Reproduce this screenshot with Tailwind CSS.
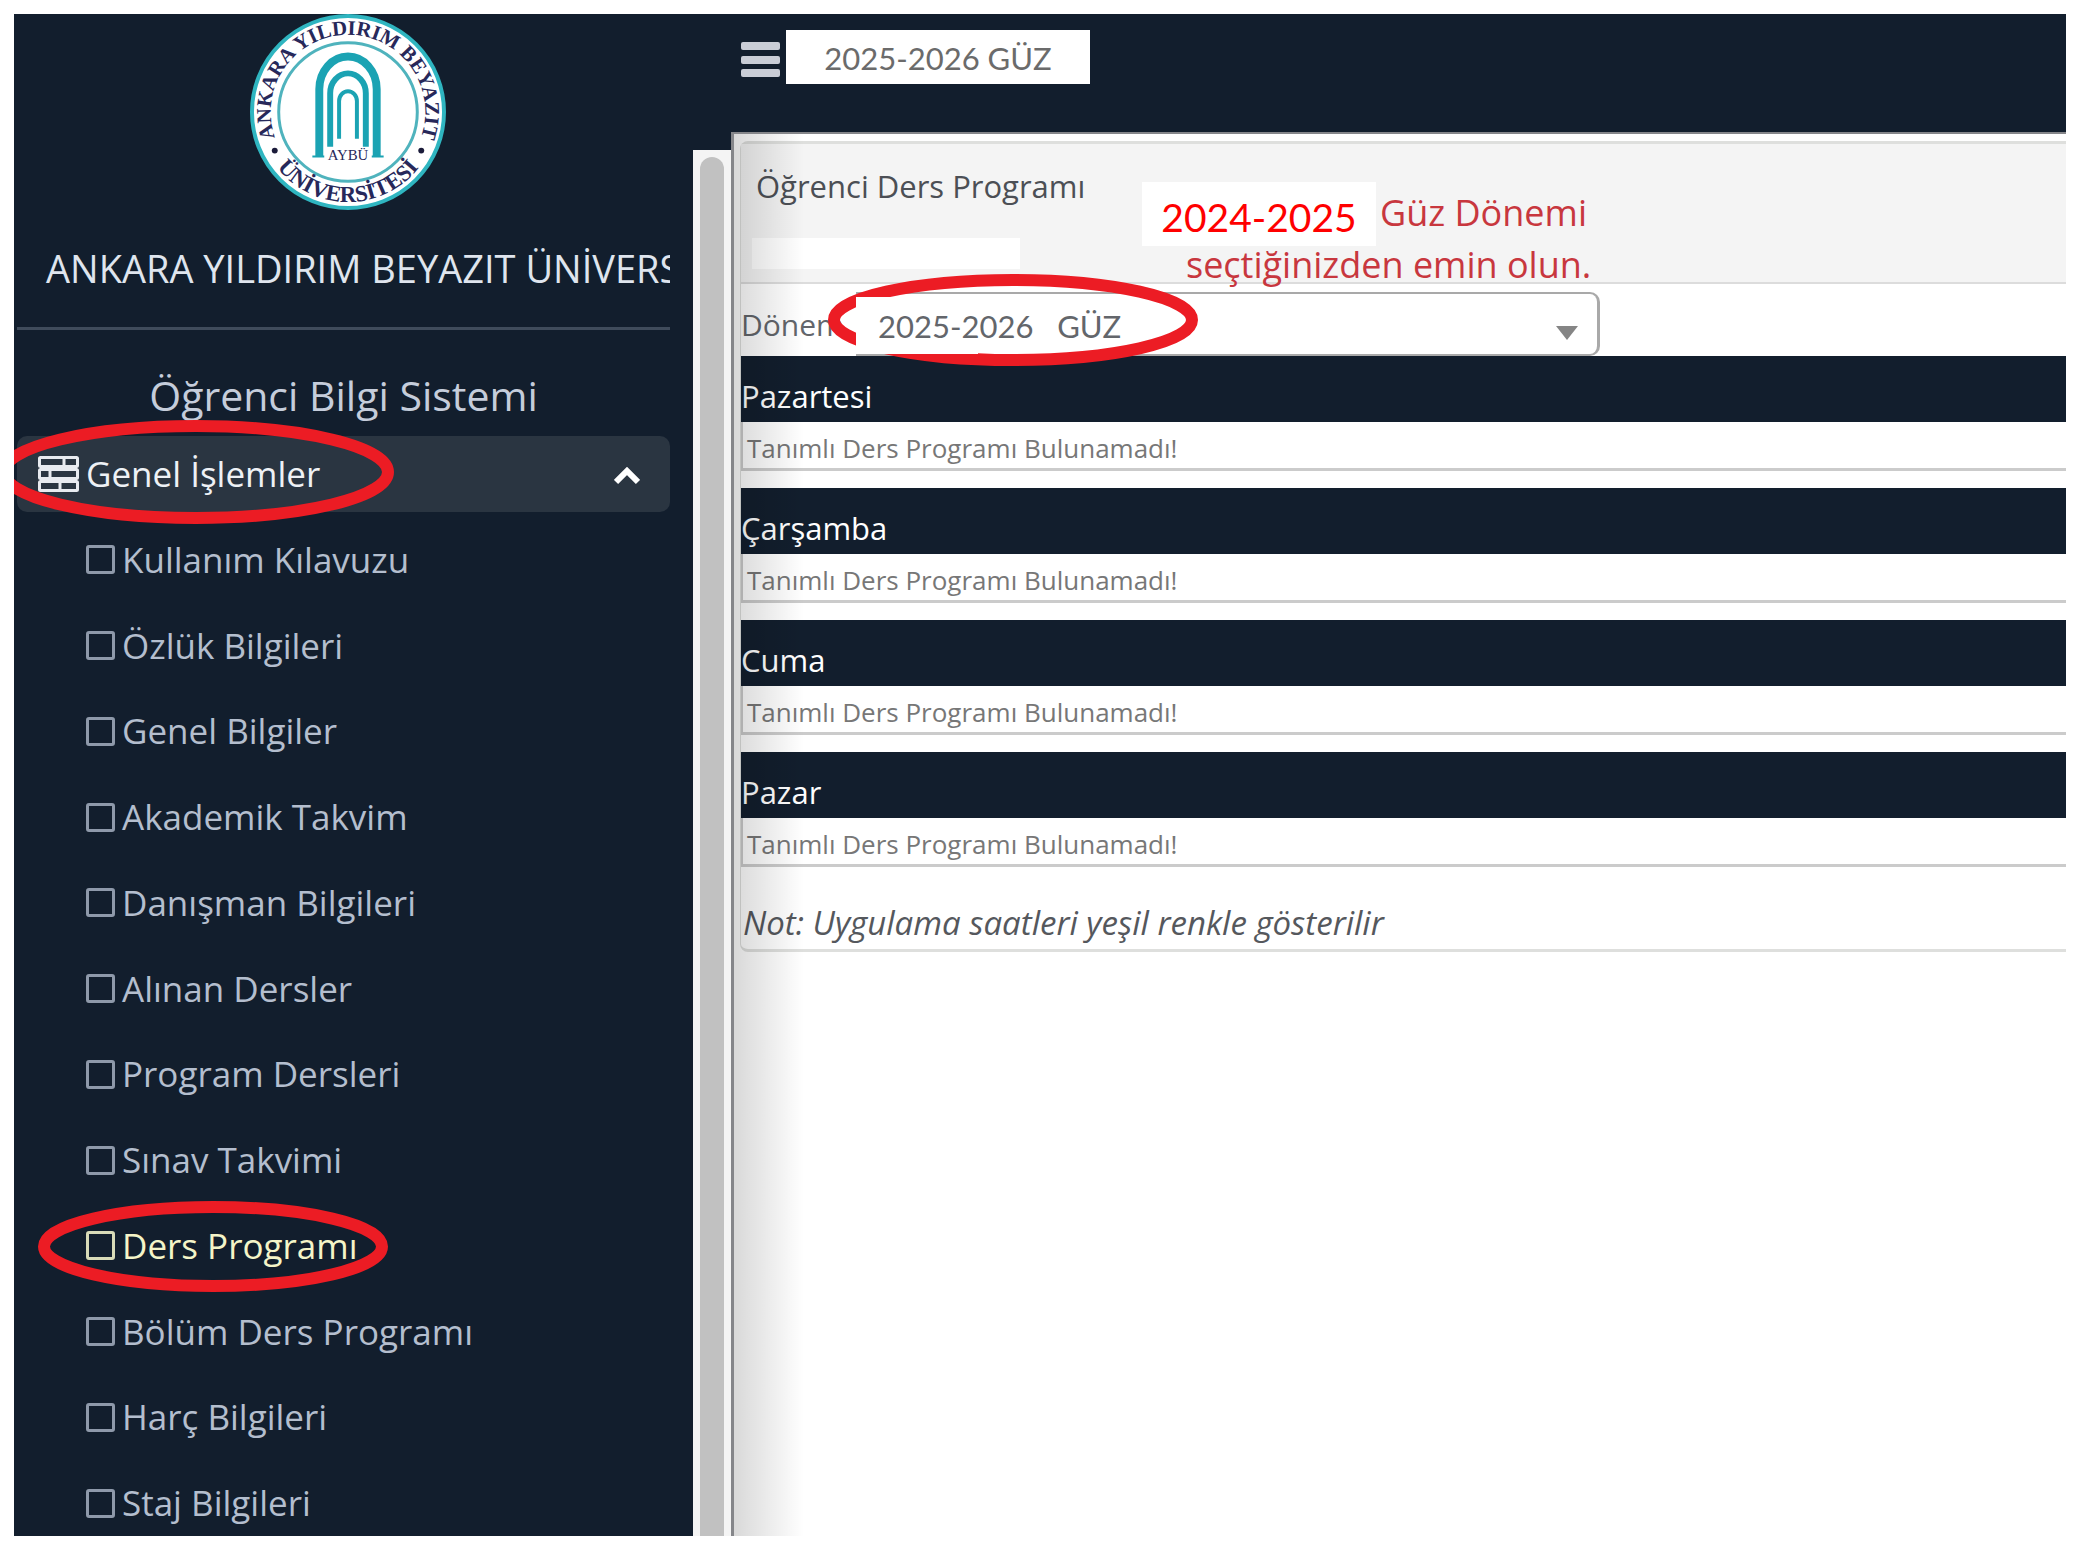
<!DOCTYPE html>
<html lang="tr">
<head>
<meta charset="utf-8">
<title>Öğrenci Ders Programı</title>
<script src="https://cdn.jsdelivr.net/npm/@tailwindcss/browser@4"></script>
</head>
<body class="flex h-screen overflow-hidden bg-white pt-[14px] pr-5 pb-[10px] pl-[14px] font-['Open_Sans',sans-serif]">

<aside class="flex w-[717px] shrink-0 overflow-hidden bg-[#121e2d]">
  <div class="w-[679px] shrink-0 pl-[3px]">
    <div class="w-[653px]">
      <svg class="ml-[233px] block size-[196px]" viewBox="0 0 198 198" role="img" aria-label="Ankara Yıldırım Beyazıt Üniversitesi">
        <defs>
          <path id="arcTop" d="M27 129A78 78 0 1 1 171 129"/>
          <path id="arcBottom" d="M8 99A91 91 0 0 0 190 99"/>
        </defs>
        <circle cx="99" cy="99" r="97" fill="#fff" stroke="#2fb5c0" stroke-width="4"/>
        <circle cx="99" cy="99" r="70" fill="#fff" stroke="#4fb3bd" stroke-width="3"/>
        <g fill="#27285a" font-family="'Liberation Serif', serif" font-weight="bold">
          <text font-size="21" text-anchor="middle"><textPath href="#arcTop" startOffset="50%">ANKARA YILDIRIM BEYAZIT</textPath></text>
          <text font-size="23" text-anchor="middle"><textPath href="#arcBottom" startOffset="50%">ÜNİVERSİTESİ</textPath></text>
          <text x="99" y="147" font-size="15" font-weight="normal" text-anchor="middle">AYBÜ</text>
        </g>
        <circle cx="25" cy="138" r="3" fill="#1b1b3a"/><circle cx="173" cy="138" r="3" fill="#1b1b3a"/>
        <g fill="none" stroke="#1ba3b3">
          <path d="M70 144V76a29 33 0 0 1 58 0v68" stroke-width="8"/>
          <path d="M81 134V80a18 20 0 0 1 36 0v54" stroke-width="6"/>
          <path d="M90 126V88a9 10 0 0 1 18 0v38" stroke-width="4"/>
          <path d="M63 144h12M123 144h12" stroke-width="2"/>
        </g>
      </svg>
      <p class="mt-7 overflow-hidden pl-[29px] text-[38px] leading-[60px] whitespace-nowrap text-[#dfe5ee]">ANKARA YILDIRIM BEYAZIT ÜNİVERSİTESİ</p>
      <hr class="mt-[29px] border-t-[3px] border-[#3f4b5b]">
      <p class="mt-[35px] text-center text-[41px] leading-[60px] text-[#c5cddb]">Öğrenci Bilgi Sistemi</p>
      <div class="relative mt-[11px]">
        <button type="button" class="flex h-[76px] w-full items-center rounded-[10px] bg-[#2a3541] pr-[30px] pl-[21px] text-left text-[35px] text-[#eef1f5]">
          <svg class="mr-[7px] h-[36px] w-[41px]" viewBox="0 0 41 36" fill="none" stroke="#e8ebf0" stroke-width="3" aria-hidden="true">
            <rect x="1.500" y="1.500" width="38" height="9" rx="1"/><rect x="1.500" y="13.500" width="38" height="9" rx="1"/><rect x="1.500" y="25.500" width="38" height="9" rx="1"/>
            <path d="M26 2v8M12 14v8M22 26v8"/>
          </svg>
          <span class="flex-1">Genel İşlemler</span>
          <svg class="mt-1 h-[18px] w-[26px]" viewBox="0 0 26 18" fill="none" stroke="#fff" stroke-width="6" aria-hidden="true"><path d="M2 15 13 4l11 11"/></svg>
        </button>
        <svg class="pointer-events-none absolute -top-4 -left-[19px] h-[104px] w-[397px]" viewBox="0 0 397 104" fill="none" stroke="#ec1c24" stroke-width="12" aria-hidden="true"><ellipse cx="198" cy="52" rx="192" ry="46"/></svg>
      </div>
      <nav class="mt-[5px] grid h-[1029px] auto-rows-fr text-[35px] leading-[60px] text-[#b4bece]">
        <a href="#" class="flex items-center pl-[69px]"><span class="mr-[7px] size-[29px] rounded-[3px] border-3 border-[#8e99aa]"></span>Kullanım Kılavuzu</a>
        <a href="#" class="flex items-center pl-[69px]"><span class="mr-[7px] size-[29px] rounded-[3px] border-3 border-[#8e99aa]"></span>Özlük Bilgileri</a>
        <a href="#" class="flex items-center pl-[69px]"><span class="mr-[7px] size-[29px] rounded-[3px] border-3 border-[#8e99aa]"></span>Genel Bilgiler</a>
        <a href="#" class="flex items-center pl-[69px]"><span class="mr-[7px] size-[29px] rounded-[3px] border-3 border-[#8e99aa]"></span>Akademik Takvim</a>
        <a href="#" class="flex items-center pl-[69px]"><span class="mr-[7px] size-[29px] rounded-[3px] border-3 border-[#8e99aa]"></span>Danışman Bilgileri</a>
        <a href="#" class="flex items-center pl-[69px]"><span class="mr-[7px] size-[29px] rounded-[3px] border-3 border-[#8e99aa]"></span>Alınan Dersler</a>
        <a href="#" class="flex items-center pl-[69px]"><span class="mr-[7px] size-[29px] rounded-[3px] border-3 border-[#8e99aa]"></span>Program Dersleri</a>
        <a href="#" class="flex items-center pl-[69px]"><span class="mr-[7px] size-[29px] rounded-[3px] border-3 border-[#8e99aa]"></span>Sınav Takvimi</a>
        <a href="#" aria-current="page" class="relative flex items-center pl-[69px] text-[#f5f5c8]"><span class="mr-[7px] size-[29px] rounded-[3px] border-3 border-[#d8dbb8]"></span>Ders Programı
          <svg class="pointer-events-none absolute -top-[2px] left-[21px] h-[91px] w-[350px]" viewBox="0 0 350 91" fill="none" stroke="#ec1c24" stroke-width="12" aria-hidden="true"><ellipse cx="175" cy="45.500" rx="169" ry="39.500"/></svg>
        </a>
        <a href="#" class="flex items-center pl-[69px]"><span class="mr-[7px] size-[29px] rounded-[3px] border-3 border-[#8e99aa]"></span>Bölüm Ders Programı</a>
        <a href="#" class="flex items-center pl-[69px]"><span class="mr-[7px] size-[29px] rounded-[3px] border-3 border-[#8e99aa]"></span>Harç Bilgileri</a>
        <a href="#" class="flex items-center pl-[69px]"><span class="mr-[7px] size-[29px] rounded-[3px] border-3 border-[#8e99aa]"></span>Staj Bilgileri</a>
      </nav>
    </div>
  </div>
  <div class="mt-[136px] flex-1 bg-[#f4f4f4] pt-[7px] pr-[7px] pl-[7px]">
    <div class="h-full rounded-t-full bg-[#c1c1c1]"></div>
  </div>
</aside>

<div class="flex min-w-0 flex-1 flex-col">
  <header class="flex h-[118px] shrink-0 items-start bg-[#121e2d] pt-4 pl-[10px]">
    <button type="button" aria-label="Menü" class="mt-3 flex h-[35px] w-[39px] flex-col justify-between">
      <span class="h-2 w-full rounded-[2px] bg-[#c9cdd6]"></span><span class="h-2 w-full rounded-[2px] bg-[#c9cdd6]"></span><span class="h-2 w-full rounded-[2px] bg-[#c9cdd6]"></span>
    </button>
    <p class="ml-[6px] h-[54px] w-[304px] bg-white text-center font-['Lato',sans-serif] text-[31px] leading-[56px] text-[#6b6b6b]">2025-2026 GÜZ</p>
  </header>

  <main class="relative min-h-0 flex-1 border-t-2 border-l-3 border-[#85868a] pt-[7px] pl-[6px]">
    <div class="rounded-l-lg border-y-[3px] border-l border-[#dedfdd]">
      <div class="relative h-[140px] border-b-2 border-[#dcdcdc] bg-[#f4f4f4] pt-[22px] pl-[15px]">
        <h1 class="text-[31px] leading-[40px] text-[#4c4f55]">Öğrenci Ders Programı</h1>
        <div class="-ml-1 mt-8 h-[31px] w-[268px] bg-white"></div>
        <div class="absolute top-[38px] left-[401px] text-[36px] text-[#c8373e]">
          <p class="flex items-start leading-[62px]"><span class="mr-[4px] h-16 w-[234px] bg-white text-center font-['Lato',sans-serif] text-[39px] leading-[70px] text-[#ff0000]">2024-2025</span>Güz Dönemi</p>
          <p class="-mt-[12px] pl-[44px] leading-[62px]">seçtiğinizden emin olun.</p>
        </div>
      </div>
      <div class="relative flex h-[72px] items-start pt-2">
        <label for="donem" class="w-[115px] shrink-0 overflow-hidden text-[30px] leading-[66px] text-[#63666b]">Dönem</label>
        <div class="relative">
          <select id="donem" class="block h-[64px] w-[744px] appearance-none rounded-r-[10px] border-y-2 border-r-3 border-[#a9a9a9] bg-white pt-[4px] pl-[22px] font-['Lato',sans-serif] text-[31px] text-[#63666b]">
            <option>2025-2026 &nbsp;&nbsp;GÜZ</option>
          </select>
          <svg class="pointer-events-none absolute top-[34px] right-[22px] h-[14px] w-[22px]" viewBox="0 0 22 14" aria-hidden="true"><path d="M0 0h22L11 14z" fill="#858585"/></svg>
        </div>
        <svg class="pointer-events-none absolute -top-[10px] left-[87px] z-10 h-[92px] w-[370px]" viewBox="0 0 370 92" fill="none" aria-hidden="true">
          <clipPath id="ringCut"><path clip-rule="evenodd" d="M0 0H370V92H0zM28 23H150V80H28z"/></clipPath>
          <ellipse cx="185" cy="46" rx="179" ry="40" stroke="#ec1c24" stroke-width="12" clip-path="url(#ringCut)"/>
        </svg>
      </div>
      <section class="mb-[17px]">
        <h2 class="h-[66px] bg-[#121e2d] text-[31px] leading-[80px] text-white">Pazartesi</h2>
        <p class="h-[49px] border-b-3 border-l-2 border-[#cbcbcb] pl-1 text-[26px] leading-[52px] text-[#777]">Tanımlı Ders Programı Bulunamadı!</p>
      </section>
      <section class="mb-[17px]">
        <h2 class="h-[66px] bg-[#121e2d] text-[31px] leading-[80px] text-white">Çarşamba</h2>
        <p class="h-[49px] border-b-3 border-l-2 border-[#cbcbcb] pl-1 text-[26px] leading-[52px] text-[#777]">Tanımlı Ders Programı Bulunamadı!</p>
      </section>
      <section class="mb-[17px]">
        <h2 class="h-[66px] bg-[#121e2d] text-[31px] leading-[80px] text-white">Cuma</h2>
        <p class="h-[49px] border-b-3 border-l-2 border-[#cbcbcb] pl-1 text-[26px] leading-[52px] text-[#777]">Tanımlı Ders Programı Bulunamadı!</p>
      </section>
      <section>
        <h2 class="h-[66px] bg-[#121e2d] text-[31px] leading-[80px] text-white">Pazar</h2>
        <p class="h-[49px] border-b-3 border-l-2 border-[#cbcbcb] pl-1 text-[26px] leading-[52px] text-[#777]">Tanımlı Ders Programı Bulunamadı!</p>
      </section>
      <p class="pt-9 pb-[6px] pl-[2px] text-[33px] leading-[40px] text-[#55585d] italic">Not: Uygulama saatleri yeşil renkle gösterilir</p>
    </div>
    <div class="pointer-events-none absolute inset-y-0 left-0 w-[70px] bg-linear-to-r from-black/15 to-transparent"></div>
  </main>
</div>
</body>
</html>
